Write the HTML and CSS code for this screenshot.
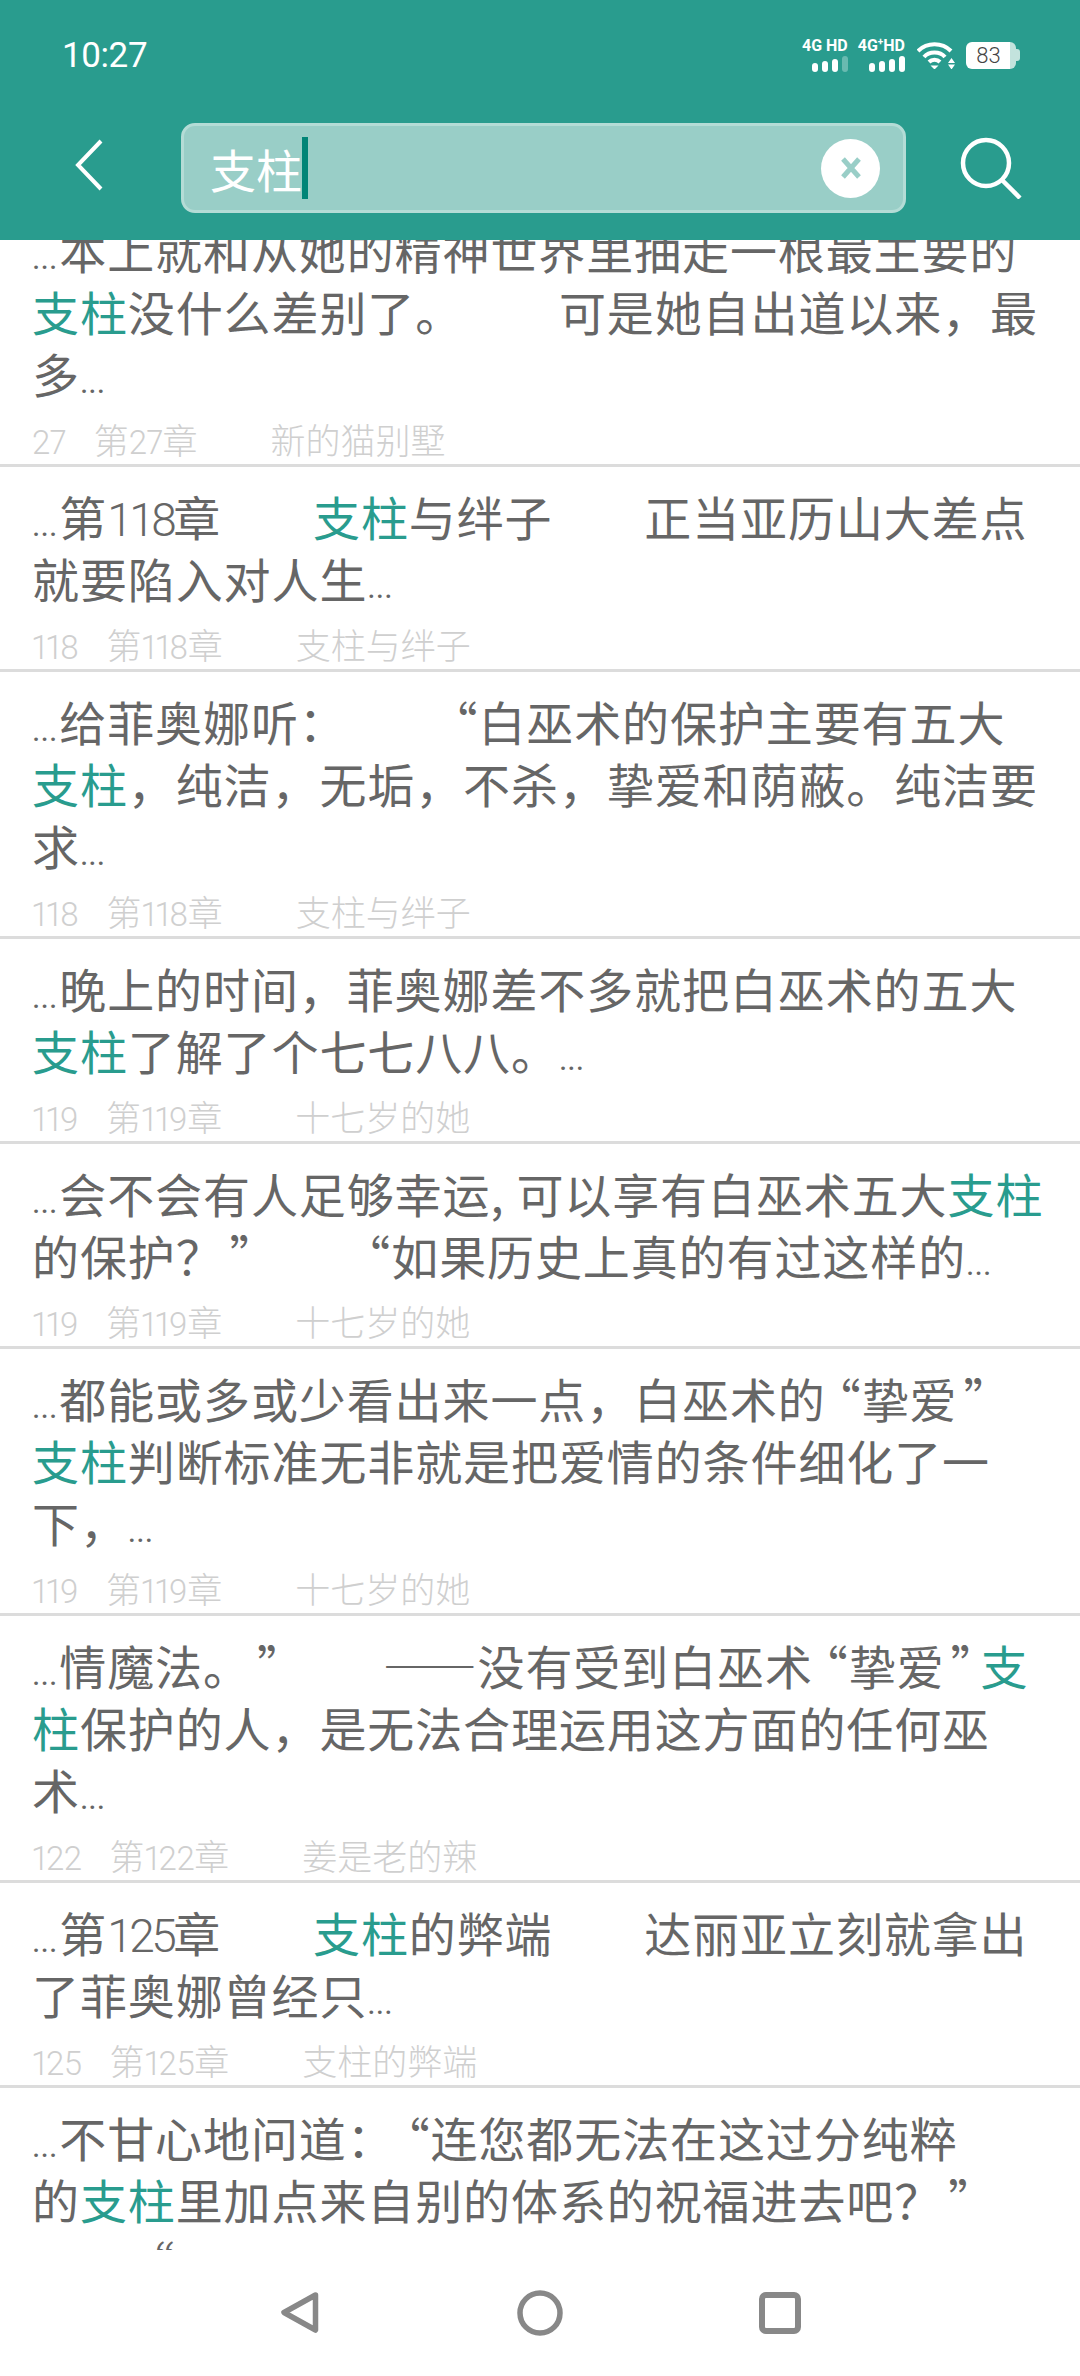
FILE: index.html
```html
<!DOCTYPE html>
<html lang="zh-CN">
<head>
  <meta charset="UTF-8" />
  <meta name="viewport" content="width=device-width, initial-scale=1.0" />
  <title>搜索</title>
  <link rel="stylesheet" href="styles.css">
</head>
<body>
  <div class="app">
    <div class="header">
      <div class="status-bar">
        <span class="time">10:27</span>
        <div class="status-icons">
          <div class="net">
            <span class="net-label">4G HD</span>
            <div class="bars"><i class="b1"></i><i class="b2"></i><i class="b3"></i><i class="b4 off"></i></div>
          </div>
          <div class="net">
            <span class="net-label">4G<sup>+</sup>HD</span>
            <div class="bars"><i class="b1"></i><i class="b2"></i><i class="b3"></i><i class="b4"></i></div>
          </div>
          <svg class="wifi" width="38" height="28" viewBox="0 0 38 28">
            <g fill="none" stroke="#fff" stroke-width="4">
              <path d="M1 10C10 1 25 1 34 10" />
              <path d="M7 16C12 10 23 10 28 16" />
              <path d="M12 21C15 18 20 18 23 21" />
            </g>
            <path d="M13.500 24.500h8l-4 4z" fill="#fff" />
            <path d="M31 22h7l-3.500-5zM31 23.500h7l-3.500 5z" fill="#fff" />
          </svg>
          <div class="battery">
            <div class="battery-body"><span class="battery-num">83</span></div>
            <div class="battery-tip"></div>
          </div>
        </div>
      </div>
      <div class="toolbar">
        <svg class="back" width="30" height="52" viewBox="0 0 30 52">
          <path d="M27 2L4 26l23 24" fill="none" stroke="#fff" stroke-width="4" />
        </svg>
        <div class="search-box">
          <span class="query">支柱</span>
          <span class="cursor"></span>
          <span class="clear">
            <svg width="24" height="24" viewBox="0 0 24 24">
              <path d="M4 3l16 18M20 3L4 21" fill="none" stroke="#99cec7" stroke-width="5" />
            </svg>
          </span>
        </div>
        <svg class="search-icon" width="62" height="62" viewBox="0 0 62 62">
          <circle cx="26" cy="26" r="23" fill="none" stroke="#fff" stroke-width="4.500" />
          <path d="M42 43l18 18" fill="none" stroke="#fff" stroke-width="4.500" />
        </svg>
      </div>
    </div>

    <div class="results">
      <div class="result-list">
        <div class="item">
          <p class="snippet"><span class="dots">...</span>本上就和从她的精神世界里抽走一根最主要的<br><em>支柱</em>没什么差别了。　　可是她自出道以来，最<br>多<span class="dots">...</span></p>
          <div class="meta"><span class="meta-num">27</span><span class="meta-chapter">第<b>27</b>章</span><span>新的猫别墅</span></div>
        </div>
        <div class="item">
          <p class="snippet"><span class="dots">...</span>第<span class="num">118</span>章<span class="gap">　　</span><em>支柱</em>与绊子<span class="gap">　　</span>正当亚历山大差点<br>就要陷入对人生<span class="dots">...</span></p>
          <div class="meta"><span class="meta-num">118</span><span class="meta-chapter">第<b>118</b>章</span><span>支柱与绊子</span></div>
        </div>
        <div class="item">
          <p class="snippet"><span class="dots">...</span>给菲奥娜听：　　<span class="ql">“</span>白巫术的保护主要有五大<br><em>支柱</em>，纯洁，无垢，不杀，挚爱和荫蔽。纯洁要<br>求<span class="dots">...</span></p>
          <div class="meta"><span class="meta-num">118</span><span class="meta-chapter">第<b>118</b>章</span><span>支柱与绊子</span></div>
        </div>
        <div class="item">
          <p class="snippet"><span class="dots">...</span>晚上的时间，菲奥娜差不多就把白巫术的五大<br><em>支柱</em>了解了个七七八八。<span class="dots">...</span></p>
          <div class="meta"><span class="meta-num">119</span><span class="meta-chapter">第<b>119</b>章</span><span>十七岁的她</span></div>
        </div>
        <div class="item">
          <p class="snippet"><span class="dots">...</span>会不会有人足够幸运<span class="comma">,</span>可以享有白巫术五大<em>支柱</em><br>的保护？<span class="qr">”</span>　　<span class="ql">“</span>如果历史上真的有过这样的<span class="dots">...</span></p>
          <div class="meta"><span class="meta-num">119</span><span class="meta-chapter">第<b>119</b>章</span><span>十七岁的她</span></div>
        </div>
        <div class="item">
          <p class="snippet"><span class="dots">...</span>都能或多或少看出来一点，白巫术的<span class="ql">“</span>挚爱<span class="qr">”</span><br><em>支柱</em>判断标准无非就是把爱情的条件细化了一<br>下，<span class="dots">...</span></p>
          <div class="meta"><span class="meta-num">119</span><span class="meta-chapter">第<b>119</b>章</span><span>十七岁的她</span></div>
        </div>
        <div class="item">
          <p class="snippet"><span class="dots">...</span>情魔法。<span class="qr">”</span>　　——没有受到白巫术<span class="ql">“</span>挚爱<span class="qr">”</span><em>支</em><br><em>柱</em>保护的人，是无法合理运用这方面的任何巫<br>术<span class="dots">...</span></p>
          <div class="meta"><span class="meta-num">122</span><span class="meta-chapter">第<b>122</b>章</span><span>姜是老的辣</span></div>
        </div>
        <div class="item">
          <p class="snippet"><span class="dots">...</span>第<span class="num">125</span>章<span class="gap">　　</span><em>支柱</em>的弊端<span class="gap">　　</span>达丽亚立刻就拿出<br>了菲奥娜曾经只<span class="dots">...</span></p>
          <div class="meta"><span class="meta-num">125</span><span class="meta-chapter">第<b>125</b>章</span><span>支柱的弊端</span></div>
        </div>
        <div class="item">
          <p class="snippet"><span class="dots">...</span>不甘心地问道：<span class="ql">“</span>连您都无法在这过分纯粹<br>的<em>支柱</em>里加点来自别的体系的祝福进去吧？<span class="close-quote">”</span><br>　　“</p>
        </div>
      </div>
    </div>

    <div class="nav-bar">
      <svg width="46" height="46" viewBox="0 0 46 46">
        <path d="M39.500 5L8 22.500 39.500 40z" fill="none" stroke="#888" stroke-width="5.500" stroke-linejoin="round" />
      </svg>
      <svg width="46" height="46" viewBox="0 0 46 46">
        <circle cx="23" cy="23" r="20" fill="none" stroke="#888" stroke-width="5.500" />
      </svg>
      <svg width="46" height="46" viewBox="0 0 46 46">
        <rect x="4" y="5" width="36" height="36" rx="4" fill="none" stroke="#888" stroke-width="6" />
      </svg>
    </div>
  </div>
</body>
</html>
```

FILE: styles.css
```css
:root {
  --teal: #299c8e;
  --text: #666;
  --meta: #cfcfcf;
  --line: #dcdcdc;
}

* {
  box-sizing: border-box;
}

body {
  margin: 0;
  background-color: #fff;
  font-family: "Noto Sans CJK SC", sans-serif;
  color: var(--text);
}

.app {
  display: flex;
  flex-direction: column;
  height: 2376px;
  overflow: hidden;
}

.header {
  flex: none;
  height: 240px;
  background-color: var(--teal);
  color: #fff;
}

.status-bar {
  display: flex;
  justify-content: space-between;
  align-items: center;
  height: 110px;
  padding: 0 60px 0 62px;
}

.time {
  font-family: Roboto, sans-serif;
  font-size: 35px;
  letter-spacing: -0.4px;
}

.status-icons {
  display: flex;
  align-items: center;
  gap: 10px;
}

.net {
  display: flex;
  flex-direction: column;
  align-items: flex-end;
  gap: 3px;
}

.net-label {
  font-family: Roboto, sans-serif;
  font-size: 16px;
  font-weight: 700;
  line-height: 14px;
}

.net-label sup {
  font-size: 10px;
  line-height: 0;
}

.bars {
  display: flex;
  align-items: flex-end;
  gap: 4px;
  height: 16px;
}

.bars i {
  width: 6px;
  border-radius: 3px;
  background-color: #fff;
}

.bars .b1 { height: 9px; }
.bars .b2 { height: 11px; }
.bars .b3 { height: 13px; }
.bars .b4 { height: 16px; }
.bars .off { background-color: rgba(255,255,255,0.3); }

.wifi {
  margin-left: 2px;
}

.battery {
  display: flex;
  align-items: center;
  margin-left: 1px;
}

.battery-body {
  width: 50px;
  height: 27px;
  padding-right: 5px;
  border-radius: 6px;
  background: linear-gradient(to right, #fff 44px, #c3e3dd 44px);
  text-align: center;
}

.battery-tip {
  width: 4px;
  height: 12px;
  border-radius: 0 3px 3px 0;
  background-color: #c3e3dd;
}

.battery-num {
  font-family: Roboto, sans-serif;
  font-size: 22px;
  font-weight: 300;
  line-height: 27px;
  color: #444;
}

.toolbar {
  display: flex;
  align-items: center;
  height: 116px;
  padding: 0 0 0 74px;
}

.back {
  flex: none;
  margin-bottom: 6px;
}

.search-box {
  display: flex;
  align-items: center;
  width: 725px;
  height: 90px;
  margin-left: 77px;
  padding: 0 23px 0 26px;
  border: 3px solid #b4dcd6;
  border-radius: 14px;
  background-color: #99cec7;
}

.query {
  font-size: 46px;
  line-height: 60px;
  color: #fff;
}

.cursor {
  width: 6px;
  height: 62px;
  background-color: #018577;
}

.clear {
  display: flex;
  justify-content: center;
  align-items: center;
  width: 59px;
  height: 59px;
  margin-left: auto;
  border-radius: 50%;
  background-color: #fff;
}

.search-icon {
  flex: none;
  margin-left: 54px;
}

.results {
  flex: 1;
  overflow: hidden;
}

.result-list {
  margin-top: -40px;
}

.item {
  padding: 18px 0 0 32px;
  border-bottom: 3px solid var(--line);
}

.snippet {
  margin: 0;
  font-size: 47px;
  line-height: 62px;
  letter-spacing: 0.9px;
  white-space: nowrap;
  text-spacing-trim: space-all;
}

.snippet em {
  font-style: normal;
  color: var(--teal);
}

.dots {
  font-family: Roboto, sans-serif;
  font-size: 32px;
  line-height: 1;
  letter-spacing: 0;
  margin-right: 2px;
}

.num {
  font-family: Roboto, sans-serif;
  font-size: 46px;
  font-weight: 300;
  line-height: 1;
  letter-spacing: -3.500px;
}

.gap {
  letter-spacing: -1.100px;
}

/* quotes are narrower than a full cell in the reference font */
.ql {
  margin-left: -12px;
}

.qr {
  margin-left: 6px;
  margin-right: -18px;
}

.close-quote {
  margin-left: 6px;
}

.comma {
  margin-right: 12px;
}

.meta {
  display: flex;
  align-items: baseline;
  height: 50px;
  margin-top: 10px;
  font-size: 35px;
  font-weight: 300;
  line-height: 50px;
  color: var(--meta);
}

.meta-num,
.meta b {
  font-family: Roboto, sans-serif;
  font-size: 33px;
  font-weight: 300;
  letter-spacing: -0.5px;
  font-variant-numeric: proportional-nums;
}

.meta-num {
  margin-right: 28px;
}

.meta-chapter {
  margin-right: 73px;
}

.nav-bar {
  display: flex;
  justify-content: center;
  align-items: flex-start;
  gap: 195px;
  flex: none;
  height: 126px;
  padding-top: 40px;
  background-color: #fff;
}
```
